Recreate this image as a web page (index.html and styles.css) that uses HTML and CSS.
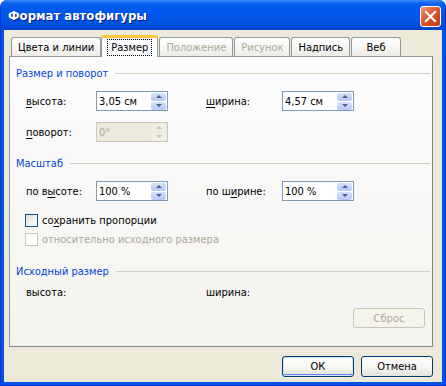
FILE: index.html
```html
<!DOCTYPE html>
<html lang="ru">
<head>
    <meta charset="UTF-8">
    <title>Формат автофигуры</title>
    <link rel="stylesheet" href="styles.css">
</head>
<body>
    <div class="window">
        <div class="titlebar">
            <span class="title">Формат автофигуры</span>
            <button class="close">
                <svg width="13" height="13" viewBox="0 0 13 13">
                    <path d="M2 2 L11 11 M11 2 L2 11" stroke="#fff" stroke-width="2.2" stroke-linecap="square"/>
                </svg>
            </button>
        </div>

        <div class="body">
            <div class="tabs">
                <div class="tab">Цвета и линии</div>
                <div class="tab active"><span class="focus">Размер</span></div>
                <div class="tab disabled">Положение</div>
                <div class="tab disabled">Рисунок</div>
                <div class="tab">Надпись</div>
                <div class="tab">Веб</div>
            </div>

            <div class="panel">
                <!-- Size and rotation -->
                <div class="group-title">Размер и поворот</div>
                <div class="field-row first">
                    <span class="label"><u>в</u>ысота:</span>
                    <div class="spin">
                        <span class="value">3,05 см</span>
                        <span class="spin-btns">
                            <span class="arrow up"></span>
                            <span class="arrow down"></span>
                        </span>
                    </div>
                    <span class="label"></span>
                    <span class="label"><u>ш</u>ирина:</span>
                    <div class="spin">
                        <span class="value">4,57 см</span>
                        <span class="spin-btns">
                            <span class="arrow up"></span>
                            <span class="arrow down"></span>
                        </span>
                    </div>
                </div>
                <div class="field-row">
                    <span class="label"><u>п</u>оворот:</span>
                    <div class="spin disabled">
                        <span class="value">0°</span>
                        <span class="spin-btns">
                            <span class="arrow up"></span>
                            <span class="arrow down"></span>
                        </span>
                    </div>
                </div>

                <!-- Scale -->
                <div class="group-title second">Масштаб</div>
                <div class="field-row first">
                    <span class="label">по в<u>ы</u>соте:</span>
                    <div class="spin">
                        <span class="value">100 %</span>
                        <span class="spin-btns">
                            <span class="arrow up"></span>
                            <span class="arrow down"></span>
                        </span>
                    </div>
                    <span class="label"></span>
                    <span class="label">по ш<u>и</u>рине:</span>
                    <div class="spin">
                        <span class="value">100 %</span>
                        <span class="spin-btns">
                            <span class="arrow up"></span>
                            <span class="arrow down"></span>
                        </span>
                    </div>
                </div>
                <label class="check first">
                    <span class="box"></span>
                    <span>со<u>х</u>ранить пропорции</span>
                </label>
                <label class="check disabled">
                    <span class="box"></span>
                    <span>относительно исходного размера</span>
                </label>

                <!-- Original size -->
                <div class="group-title third">Исходный размер</div>
                <div class="field-row plain">
                    <span class="label">высота:</span>
                    <span></span>
                    <span></span>
                    <span class="label">ширина:</span>
                </div>
                <div class="reset-row">
                    <button class="btn disabled">Сброс</button>
                </div>
            </div>

            <div class="footer">
                <button class="btn default">ОК</button>
                <button class="btn">Отмена</button>
            </div>
        </div>
    </div>
</body>
</html>
```

FILE: styles.css
```css
/* Global */
body, html {
    margin: 0;
    padding: 0;
    background: #fff;
    font-family: 'DejaVu Sans', 'Liberation Sans', sans-serif;
    font-stretch: condensed;
    font-size: 11px;
    color: #000;
}

/* Window frame */
.window {
    width: 446px;
    height: 386px;
    box-sizing: border-box;
    display: flex;
    flex-direction: column;
    background: #0054e3;
    border: 1px solid #0831d9;
    border-top: none;
    border-radius: 7px 7px 0 0;
    padding: 0 3px 3px 3px;
}

.titlebar {
    height: 30px;
    margin: 0 -3px;
    padding: 0 4px 0 7px;
    display: flex;
    align-items: center;
    justify-content: space-between;
    border-radius: 7px 7px 0 0;
    background: linear-gradient(to bottom, #3c8cf8 0%, #0a61ed 12%, #0058ee 30%, #0054e3 70%, #0049d6 92%, #0041cc 100%);
}

.title {
    color: #fff;
    font-weight: bold;
    font-size: 13px;
    text-shadow: 1px 1px 0 #0a1883;
    margin-top: 1px;
}

.close {
    width: 21px;
    height: 21px;
    padding: 0;
    border: 1px solid #fff;
    border-radius: 3px;
    background: linear-gradient(135deg, #ee9b7e 0%, #e2633e 35%, #d2451c 70%, #c6401c 100%);
    display: flex;
    align-items: center;
    justify-content: center;
    margin-top: 2px;
}

/* Dialog body */
.body {
    flex: 1;
    background: #ece9d8;
    display: flex;
    flex-direction: column;
    padding: 6px 9px 5px 5px;
}

/* Tabs */
.tabs {
    display: flex;
    align-items: flex-end;
    padding-left: 2px;
    height: 21px;
    position: relative;
    z-index: 1;
    margin-bottom: -1px;
}

.tab {
    height: 19px;
    min-width: 50px;
    box-sizing: border-box;
    padding: 0 6px;
    margin-right: 1px;
    margin-bottom: 1px;
    display: flex;
    align-items: center;
    justify-content: center;
    border: 1px solid #919b9c;
    border-bottom: none;
    border-radius: 3px 3px 0 0;
    background: linear-gradient(to bottom, #fff 0%, #f7f7f5 50%, #ecebe6 100%);
}

.tab.disabled {
    color: #aca899;
}

.tab.active {
    height: 22px;
    margin: 0 1px 0 -1px;
    border-top: 3px solid #ffc83c;
    background: #fcfcfe;
    padding: 0 5px;
    box-shadow: inset 1px 0 0 #fff;
}

.focus {
    border: 1px dotted #000;
    padding: 1px 3px;
}

/* Tab panel */
.panel {
    flex: 1;
    border: 1px solid #919b9c;
    border-right-color: #7f8888;
    border-bottom-color: #7f8888;
    background: linear-gradient(to bottom, #fcfcfe 0%, #f4f3ee 100%);
    padding: 9px 2px 0 6px;
    display: flex;
    flex-direction: column;
}

.group-title {
    height: 14px;
    display: flex;
    align-items: center;
    color: #0046d5;
}

.group-title::after {
    content: '';
    flex: 1;
    height: 1px;
    margin-left: 7px;
    background: #d0d0bf;
}

.group-title.second {
    margin-top: 14px;
}

.group-title.third {
    margin-top: 18px;
}

.field-row {
    display: grid;
    grid-template-columns: 70px 72px 38px 76px 72px;
    align-items: center;
    height: 20px;
    margin: 11px 0 0 10px;
}

.field-row.plain {
    margin-top: 4px;
}

.label u, .check u {
    text-decoration-thickness: 1px;
    text-underline-offset: 2px;
}

/* Spin edit */
.spin {
    height: 20px;
    box-sizing: border-box;
    border: 1px solid #7f9db9;
    background: #fff;
    display: flex;
    align-items: center;
    justify-content: space-between;
    padding: 0 1px 0 2px;
}

.spin-btns {
    width: 15px;
    height: 17px;
    display: flex;
    flex-direction: column;
    gap: 1px;
}

.arrow {
    flex: 1;
    border-radius: 2px;
    background: linear-gradient(to bottom, #d4e0fc, #b5c8f6);
    display: flex;
    align-items: center;
    justify-content: center;
}

.arrow::before {
    content: '';
    width: 0;
    height: 0;
    border-left: 3px solid transparent;
    border-right: 3px solid transparent;
}

.arrow.up::before {
    border-bottom: 3px solid #4d6185;
}

.arrow.down::before {
    border-top: 3px solid #4d6185;
}

.spin.disabled {
    background: #ebeadb;
    border-color: #c9c7ba;
    color: #aca899;
}

.spin.disabled .arrow {
    background: #f1efe2;
}

.spin.disabled .arrow.up::before {
    border-bottom-color: #c9c7ba;
}

.spin.disabled .arrow.down::before {
    border-top-color: #c9c7ba;
}

/* Checkboxes */
.check {
    display: flex;
    align-items: center;
    gap: 4px;
    height: 13px;
    margin: 6px 0 0 9px;
}

.check.first {
    margin-top: 13px;
}

.box {
    width: 13px;
    height: 13px;
    box-sizing: border-box;
    border: 1px solid #1c5180;
    background: linear-gradient(135deg, #dcdcd7 0%, #f2f2ef 60%, #fff 100%);
}

.check.disabled {
    color: #aca899;
}

.check.disabled .box {
    border-color: #cac8bb;
    background: #fff;
}

/* Buttons */
.reset-row {
    display: flex;
    justify-content: flex-end;
    margin: 6px 5px 0 0;
}

.btn {
    width: 72px;
    height: 21px;
    padding: 0;
    font: inherit;
    color: #000;
    border: 1px solid #003c74;
    border-radius: 3px;
    background: linear-gradient(to bottom, #fff 0%, #f4f4f0 60%, #e3e2da 100%);
}

.btn.disabled {
    height: 20px;
    border-color: #c9c7ba;
    color: #aca899;
    background: #f5f4ea;
}

.btn.default {
    box-shadow: inset 0 0 0 1px #cee7ff, inset 0 -1px 0 1px #6982ee;
}

.footer {
    display: flex;
    justify-content: flex-end;
    gap: 7px;
    margin-top: 9px;
}
```
